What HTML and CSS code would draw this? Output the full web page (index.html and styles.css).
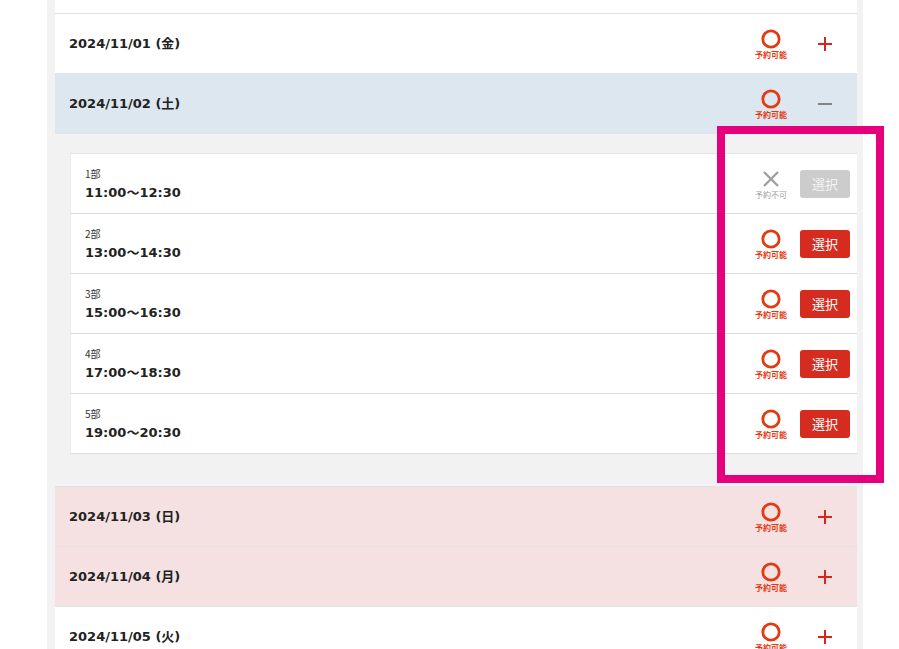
FILE: index.html
```html
<html>
<head>
<title>予約日時の選択</title>
<meta name="viewport" content="width=device-width, initial-scale=1"/>
<link rel="stylesheet" href="styles.css">
</head>

<body>

<div id="calendar">
  <div class="day day-cut"></div>

  <div class="day">
    <span class="date">2024/11/01 (金)</span>
    <div class="side">
      <div class="status ok">
        <svg width="20" height="20" viewBox="0 0 20 20"><circle cx="10" cy="10" r="8.2" fill="none" stroke="currentColor" stroke-width="2.8"/></svg>
        <span>予約可能</span>
      </div>
      <div class="toggle"><svg width="14" height="14" viewBox="0 0 14 14"><path d="M7 0V14M0 7H14" stroke="currentColor" stroke-width="2"/></svg></div>
    </div>
  </div>

  <div class="day open">
    <span class="date">2024/11/02 (土)</span>
    <div class="side">
      <div class="status ok">
        <svg width="20" height="20" viewBox="0 0 20 20"><circle cx="10" cy="10" r="8.2" fill="none" stroke="currentColor" stroke-width="2.8"/></svg>
        <span>予約可能</span>
      </div>
      <div class="toggle minus"><svg width="14" height="14" viewBox="0 0 14 14"><path d="M0 7H14" stroke="currentColor" stroke-width="1.5"/></svg></div>
    </div>
  </div>

  <div class="slots">
    <div class="slot">
      <div class="slot-text"><span class="part">1部</span><span class="time">11:00〜12:30</span></div>
      <div class="side">
        <div class="status ng">
          <svg width="20" height="20" viewBox="0 0 20 20"><path d="M3 3L17 17M17 3L3 17" stroke="currentColor" stroke-width="2.4"/></svg>
          <span>予約不可</span>
        </div>
        <button class="pick" disabled>選択</button>
      </div>
    </div>
    <div class="slot">
      <div class="slot-text"><span class="part">2部</span><span class="time">13:00〜14:30</span></div>
      <div class="side">
        <div class="status ok">
          <svg width="20" height="20" viewBox="0 0 20 20"><circle cx="10" cy="10" r="8.2" fill="none" stroke="currentColor" stroke-width="2.8"/></svg>
          <span>予約可能</span>
        </div>
        <button class="pick">選択</button>
      </div>
    </div>
    <div class="slot">
      <div class="slot-text"><span class="part">3部</span><span class="time">15:00〜16:30</span></div>
      <div class="side">
        <div class="status ok">
          <svg width="20" height="20" viewBox="0 0 20 20"><circle cx="10" cy="10" r="8.2" fill="none" stroke="currentColor" stroke-width="2.8"/></svg>
          <span>予約可能</span>
        </div>
        <button class="pick">選択</button>
      </div>
    </div>
    <div class="slot">
      <div class="slot-text"><span class="part">4部</span><span class="time">17:00〜18:30</span></div>
      <div class="side">
        <div class="status ok">
          <svg width="20" height="20" viewBox="0 0 20 20"><circle cx="10" cy="10" r="8.2" fill="none" stroke="currentColor" stroke-width="2.8"/></svg>
          <span>予約可能</span>
        </div>
        <button class="pick">選択</button>
      </div>
    </div>
    <div class="slot">
      <div class="slot-text"><span class="part">5部</span><span class="time">19:00〜20:30</span></div>
      <div class="side">
        <div class="status ok">
          <svg width="20" height="20" viewBox="0 0 20 20"><circle cx="10" cy="10" r="8.2" fill="none" stroke="currentColor" stroke-width="2.8"/></svg>
          <span>予約可能</span>
        </div>
        <button class="pick">選択</button>
      </div>
    </div>
  </div>

  <div class="day holiday">
    <span class="date">2024/11/03 (日)</span>
    <div class="side">
      <div class="status ok">
        <svg width="20" height="20" viewBox="0 0 20 20"><circle cx="10" cy="10" r="8.2" fill="none" stroke="currentColor" stroke-width="2.8"/></svg>
        <span>予約可能</span>
      </div>
      <div class="toggle"><svg width="14" height="14" viewBox="0 0 14 14"><path d="M7 0V14M0 7H14" stroke="currentColor" stroke-width="2"/></svg></div>
    </div>
  </div>

  <div class="day holiday">
    <span class="date">2024/11/04 (月)</span>
    <div class="side">
      <div class="status ok">
        <svg width="20" height="20" viewBox="0 0 20 20"><circle cx="10" cy="10" r="8.2" fill="none" stroke="currentColor" stroke-width="2.8"/></svg>
        <span>予約可能</span>
      </div>
      <div class="toggle"><svg width="14" height="14" viewBox="0 0 14 14"><path d="M7 0V14M0 7H14" stroke="currentColor" stroke-width="2"/></svg></div>
    </div>
  </div>

  <div class="day">
    <span class="date">2024/11/05 (火)</span>
    <div class="side">
      <div class="status ok">
        <svg width="20" height="20" viewBox="0 0 20 20"><circle cx="10" cy="10" r="8.2" fill="none" stroke="currentColor" stroke-width="2.8"/></svg>
        <span>予約可能</span>
      </div>
      <div class="toggle"><svg width="14" height="14" viewBox="0 0 14 14"><path d="M7 0V14M0 7H14" stroke="currentColor" stroke-width="2"/></svg></div>
    </div>
  </div>
</div>

<!-- annotation frame drawn over the slot buttons -->
<div class="mark"></div>

</body>
</html>
```

FILE: styles.css
```css
html, body {margin:0; padding:0;}
body {
 background: #fff;
 color: #222;
 font: normal 13px/1.3 "DejaVu Sans", "Noto Sans CJK JP", sans-serif;
}

#calendar {
 margin-left: 47px;
 width: 816px;
 padding: 0 6px 0 8px;
 box-sizing: border-box;
 background: #f2f2f2;
}

.day {
 display: flex;
 align-items: center;
 justify-content: space-between;
 height: 60px;
 padding-left: 14px;
 background: #fff;
 border-bottom: 1px solid #e2e2e2;
 box-sizing: border-box;
}
.day-cut {height: 14px;}
.day.open {background: #dde7ef;}
.day.holiday {background: #f5e1e1;}
.date {font-weight: bold; font-size: 13px; padding-top: 1px;}

.side {display: flex; align-items: center; height: 100%;}
.day .side {padding-right: 12px;}

.status {
 display: flex;
 flex-direction: column;
 align-items: center;
 width: 40px;
 font-family: "Noto Sans CJK JP", sans-serif;
 font-size: 8px;
 line-height: 9px;
}
.status svg {display: block; margin-bottom: 1px;}
.status.ok {color: #e33a14; font-weight: bold;}
.status.ng {color: #a0a0a0;}

.toggle {width: 40px; margin-left: 14px; display: flex; justify-content: center; color: #d8251c;}
.toggle.minus {color: #666;}
.toggle svg {display: block;}

.slots {
 padding: 19px 0 32px 15px;
 border-bottom: 1px solid #e2e2e2;
}
.slot {
 display: flex;
 align-items: center;
 justify-content: space-between;
 height: 60px;
 padding-left: 14px;
 background: #fff;
 border-bottom: 1px solid #dcdcdc;
 border-left: 1px solid #ececec;
 box-sizing: border-box;
}
.slot:first-child {border-top: 1px solid #e4e4e4; height: 61px;}
.slot-text {display: flex; flex-direction: column; padding-top: 2px;}
.part {font-family: "Noto Sans CJK JP", sans-serif; font-size: 10px; line-height: 14px; color: #333;}
.time {font-weight: bold; font-size: 13px; line-height: 20px; margin-top: 2px;}
.slot .side {padding-right: 7px;}

.pick {
 width: 50px;
 height: 28px;
 margin-left: 9px;
 border: 0;
 border-radius: 3px;
 background: #d62c1f;
 color: #fff;
 font: normal 13px/28px "Noto Sans CJK JP", sans-serif;
 padding: 0;
}
.pick[disabled] {background: #cccccc; color: #f4f4f4;}

.mark {
 position: absolute;
 left: 717px;
 top: 126px;
 width: 167px;
 height: 357px;
 border: 8px solid #e6007e;
 box-sizing: border-box;
}
```
